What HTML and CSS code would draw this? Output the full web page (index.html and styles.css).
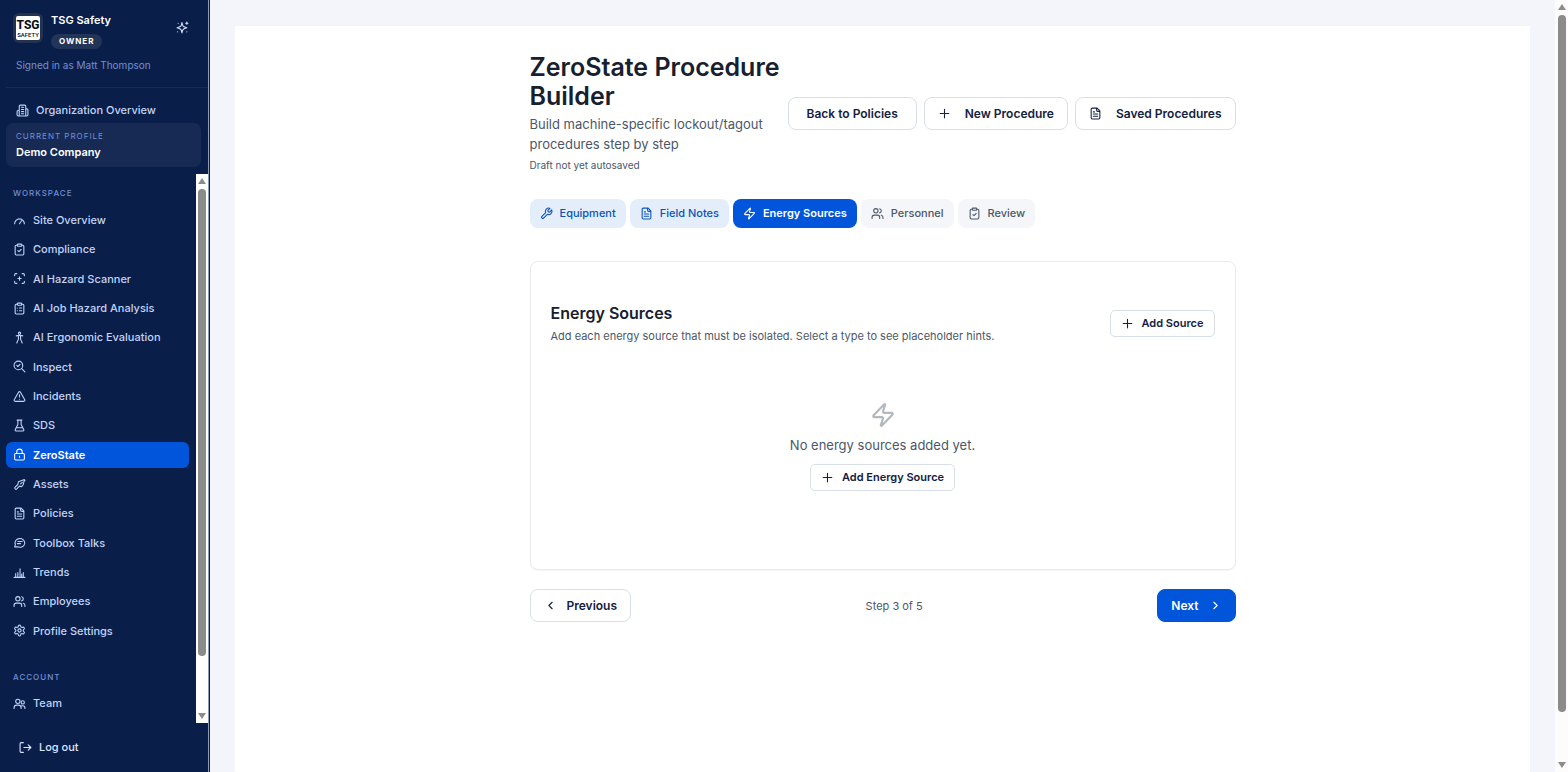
FILE: index.html
```
<!DOCTYPE html>
<html lang="en">
<head>
    <meta charset="UTF-8">
    <meta name="viewport" content="width=device-width, initial-scale=1.0">
    <title>ZeroState Procedure Builder - TSG Safety</title>
    <link rel="stylesheet" href="styles.css">
</head>
<body>
    <!-- Icon set -->
    <svg class="sprite" aria-hidden="true">
        <symbol id="i-sparkles" viewBox="0 0 24 24"><path d="M11 3c1 6 2 8 9 9.500-7 1.500-8 3.500-9 9.500-1-6-2-8-9-9.500 7-1.500 8-3.500 9-9.500z"/><path d="M20 2v4M18 4h4M20 20h.01M4 4h.01M3 20h.01"/></symbol>
        <symbol id="i-building" viewBox="0 0 24 24"><path d="M6 22V4a2 2 0 0 1 2-2h8a2 2 0 0 1 2 2v18zM6 12H4a2 2 0 0 0-2 2v6a2 2 0 0 0 2 2h2M18 9h2a2 2 0 0 1 2 2v9a2 2 0 0 1-2 2h-2M10 6h4M10 10h4M10 14h4M10 18h4"/></symbol>
        <symbol id="i-gauge" viewBox="0 0 24 24"><path d="M12 18l4-6M3 18a9 9 0 0 1 18 0"/></symbol>
        <symbol id="i-clip-check" viewBox="0 0 24 24"><rect x="8" y="2" width="8" height="4" rx="1"/><path d="M16 4h2a2 2 0 0 1 2 2v14a2 2 0 0 1-2 2H6a2 2 0 0 1-2-2V6a2 2 0 0 1 2-2h2M9 14l2 2 4-4"/></symbol>
        <symbol id="i-scan" viewBox="0 0 24 24"><path d="M3 7V5a2 2 0 0 1 2-2h2M17 3h2a2 2 0 0 1 2 2v2M21 17v2a2 2 0 0 1-2 2h-2M7 21H5a2 2 0 0 1-2-2v-2M12 9v6M9 12h6"/></symbol>
        <symbol id="i-clip-list" viewBox="0 0 24 24"><rect x="8" y="2" width="8" height="4" rx="1"/><path d="M16 4h2a2 2 0 0 1 2 2v14a2 2 0 0 1-2 2H6a2 2 0 0 1-2-2V6a2 2 0 0 1 2-2h2M12 11h4M12 16h4M8 11h.01M8 16h.01"/></symbol>
        <symbol id="i-person" viewBox="0 0 24 24"><circle cx="12" cy="4" r="2"/><path d="M6 9l6-1 6 1M10 9v6l-3 7M14 9v6l3 7"/></symbol>
        <symbol id="i-search-check" viewBox="0 0 24 24"><circle cx="10" cy="10" r="8"/><path d="M22 22l-6-6M7 10l2 2 4-4"/></symbol>
        <symbol id="i-alert" viewBox="0 0 24 24"><path d="M21.730 18l-8-14a2 2 0 0 0-3.480 0l-8 14A2 2 0 0 0 4 21h16a2 2 0 0 0 1.730-3zM12 9v4M12 17h.01"/></symbol>
        <symbol id="i-flask" viewBox="0 0 24 24"><path d="M9 2v8L4 20a1.500 1.500 0 0 0 1.300 2h13.400A1.500 1.500 0 0 0 20 20l-5-10V2M7.500 2h9M6.500 16h11"/></symbol>
        <symbol id="i-lock" viewBox="0 0 24 24"><rect x="3" y="10" width="18" height="12" rx="2"/><path d="M7 10V7a5 5 0 0 1 10 0v3M12 15v2"/></symbol>
        <symbol id="i-plug" viewBox="0 0 24 24"><path d="M9 12l-5 5a2 2 0 0 0 3 3l5-5 4 1 3-4 1-5 2-3M9 12l1-5 5-2 6-2M14 11l3-3"/></symbol>
        <symbol id="i-file" viewBox="0 0 24 24"><path d="M15 2H6a2 2 0 0 0-2 2v16a2 2 0 0 0 2 2h12a2 2 0 0 0 2-2V7zM14 2v4a2 2 0 0 0 2 2h4M10 9H8M16 13H8M16 17H8"/></symbol>
        <symbol id="i-chat" viewBox="0 0 24 24"><path d="M3 20l1.500-4A9 8 0 1 1 9 20zM9 10h8M8 14h6"/></symbol>
        <symbol id="i-chart" viewBox="0 0 24 24"><path d="M2 21h20M5 21v-7M9 21v-9M13 21V5M19 21V12M16 21V15"/></symbol>
        <symbol id="i-users" viewBox="0 0 24 24"><path d="M16 21v-2a4 4 0 0 0-4-4H6a4 4 0 0 0-4 4v2M22 21v-2a4 4 0 0 0-3-3.870M16 3.130a4 4 0 0 1 0 7.750"/><circle cx="9" cy="7" r="4"/></symbol>
        <symbol id="i-gear" viewBox="0 0 24 24"><path d="M12.220 2h-.44a2 2 0 0 0-2 2v.18a2 2 0 0 1-1 1.730l-.43.25a2 2 0 0 1-2 0l-.15-.08a2 2 0 0 0-2.730.73l-.22.38a2 2 0 0 0 .73 2.730l.15.1a2 2 0 0 1 1 1.720v.51a2 2 0 0 1-1 1.740l-.15.09a2 2 0 0 0-.73 2.730l.22.38a2 2 0 0 0 2.730.73l.15-.08a2 2 0 0 1 2 0l.43.25a2 2 0 0 1 1 1.730V20a2 2 0 0 0 2 2h.44a2 2 0 0 0 2-2v-.18a2 2 0 0 1 1-1.730l.43-.25a2 2 0 0 1 2 0l.15.08a2 2 0 0 0 2.730-.73l.22-.39a2 2 0 0 0-.73-2.730l-.15-.08a2 2 0 0 1-1-1.740v-.5a2 2 0 0 1 1-1.740l.15-.09a2 2 0 0 0 .73-2.730l-.22-.38a2 2 0 0 0-2.730-.73l-.15.08a2 2 0 0 1-2 0l-.43-.25a2 2 0 0 1-1-1.730V4a2 2 0 0 0-2-2z"/><circle cx="12" cy="12" r="3"/></symbol>
        <symbol id="i-team" viewBox="0 0 24 24"><circle cx="9" cy="8" r="4"/><circle cx="18" cy="10" r="3"/><path d="M2 21v-1a5 5 0 0 1 5-5h3a5 5 0 0 1 5 5v1M16 16h2a4 4 0 0 1 4 4v1"/></symbol>
        <symbol id="i-logout" viewBox="0 0 24 24"><path d="M8 21H4a2 2 0 0 1-2-2V5a2 2 0 0 1 2-2h4M17 17l5-5-5-5M22 12H9"/></symbol>
        <symbol id="i-wrench" viewBox="0 0 24 24"><path d="M14.700 6.300a1 1 0 0 0 0 1.400l1.600 1.600a1 1 0 0 0 1.400 0l3.770-3.770a6 6 0 0 1-7.940 7.940l-6.910 6.910a2.120 2.120 0 0 1-3-3l6.910-6.910a6 6 0 0 1 7.940-7.940l-3.760 3.760z"/></symbol>
        <symbol id="i-zap" viewBox="0 0 24 24"><path d="M4 14a1 1 0 0 1-.78-1.630l9.900-10.200a.5.5 0 0 1 .86.46l-1.920 6.020A1 1 0 0 0 13 10h7a1 1 0 0 1 .78 1.630l-9.900 10.200a.5.5 0 0 1-.86-.46l1.920-6.020A1 1 0 0 0 11 14z"/></symbol>
        <symbol id="i-plus" viewBox="0 0 24 24"><path d="M4 12h16M12 4v16"/></symbol>
        <symbol id="i-left" viewBox="0 0 24 24"><path d="M15 18l-6-6 6-6"/></symbol>
        <symbol id="i-right" viewBox="0 0 24 24"><path d="M9 18l6-6-6-6"/></symbol>
    </svg>

    <div class="app">
        <aside class="sidebar">
            <div class="brand">
                <div class="logo"><div class="logo-tile"><span class="logo-name">TSG</span><span class="logo-sub">SAFETY</span></div></div>
                <div class="brand-text">
                    <div class="brand-name">TSG Safety</div>
                    <span class="badge">OWNER</span>
                </div>
                <button class="sparkle-btn" type="button" aria-label="Assistant"><svg class="icon"><use href="#i-sparkles"/></svg></button>
            </div>
            <div class="signed-in">Signed in as Matt Thompson</div>

            <div class="org">
                <a class="org-link" href="#"><svg class="icon"><use href="#i-building"/></svg>Organization Overview</a>
                <div class="profile">
                    <div class="profile-label">CURRENT PROFILE</div>
                    <div class="profile-name">Demo Company</div>
                </div>
            </div>

            <div class="nav-area">
                <nav class="nav">
                    <h2 class="nav-label">WORKSPACE</h2>
                    <div class="nav-list">
                        <a class="nav-link" href="#"><svg class="icon"><use href="#i-gauge"/></svg>Site Overview</a>
                        <a class="nav-link" href="#"><svg class="icon"><use href="#i-clip-check"/></svg>Compliance</a>
                        <a class="nav-link" href="#"><svg class="icon"><use href="#i-scan"/></svg>AI Hazard Scanner</a>
                        <a class="nav-link" href="#"><svg class="icon"><use href="#i-clip-list"/></svg>AI Job Hazard Analysis</a>
                        <a class="nav-link" href="#"><svg class="icon"><use href="#i-person"/></svg>AI Ergonomic Evaluation</a>
                        <a class="nav-link" href="#"><svg class="icon"><use href="#i-search-check"/></svg>Inspect</a>
                        <a class="nav-link" href="#"><svg class="icon"><use href="#i-alert"/></svg>Incidents</a>
                        <a class="nav-link" href="#"><svg class="icon"><use href="#i-flask"/></svg>SDS</a>
                        <a class="nav-link active" href="#" aria-current="page"><svg class="icon"><use href="#i-lock"/></svg>ZeroState</a>
                        <a class="nav-link" href="#"><svg class="icon"><use href="#i-plug"/></svg>Assets</a>
                        <a class="nav-link" href="#"><svg class="icon"><use href="#i-file"/></svg>Policies</a>
                        <a class="nav-link" href="#"><svg class="icon"><use href="#i-chat"/></svg>Toolbox Talks</a>
                        <a class="nav-link" href="#"><svg class="icon"><use href="#i-chart"/></svg>Trends</a>
                        <a class="nav-link" href="#"><svg class="icon"><use href="#i-users"/></svg>Employees</a>
                        <a class="nav-link" href="#"><svg class="icon"><use href="#i-gear"/></svg>Profile Settings</a>
                    </div>
                    <h2 class="nav-label account">ACCOUNT</h2>
                    <a class="nav-link" href="#"><svg class="icon"><use href="#i-team"/></svg>Team</a>
                </nav>
                <div class="scrollbar" aria-hidden="true">
                    <span class="arrow up"></span>
                    <div class="track"><div class="thumb"></div></div>
                    <span class="arrow down"></span>
                </div>
            </div>

            <button class="logout" type="button"><svg class="icon"><use href="#i-logout"/></svg>Log out</button>
        </aside>

        <main class="main">
            <div class="page">
                <div class="content">
                    <header class="page-header">
                        <div class="page-title">
                            <h1>ZeroState Procedure Builder</h1>
                            <p class="subtitle">Build machine-specific lockout/tagout procedures step by step</p>
                            <p class="draft">Draft not yet autosaved</p>
                        </div>
                        <div class="actions">
                            <button class="btn wide" type="button">Back to Policies</button>
                            <button class="btn" type="button"><svg class="icon"><use href="#i-plus"/></svg>New Procedure</button>
                            <button class="btn" type="button"><svg class="icon"><use href="#i-file"/></svg>Saved Procedures</button>
                        </div>
                    </header>

                    <div class="steps">
                        <button class="step done" type="button"><svg class="icon"><use href="#i-wrench"/></svg>Equipment</button>
                        <button class="step done" type="button"><svg class="icon"><use href="#i-file"/></svg>Field Notes</button>
                        <button class="step current" type="button"><svg class="icon"><use href="#i-zap"/></svg>Energy Sources</button>
                        <button class="step" type="button"><svg class="icon"><use href="#i-users"/></svg>Personnel</button>
                        <button class="step" type="button"><svg class="icon"><use href="#i-clip-check"/></svg>Review</button>
                    </div>

                    <section class="card">
                        <div class="card-header">
                            <div>
                                <h2>Energy Sources</h2>
                                <p>Add each energy source that must be isolated. Select a type to see placeholder hints.</p>
                            </div>
                            <button class="btn small" type="button"><svg class="icon"><use href="#i-plus"/></svg>Add Source</button>
                        </div>
                        <div class="empty">
                            <svg class="icon"><use href="#i-zap"/></svg>
                            <p>No energy sources added yet.</p>
                            <button class="btn small" type="button"><svg class="icon"><use href="#i-plus"/></svg>Add Energy Source</button>
                        </div>
                    </section>

                    <div class="pager">
                        <button class="btn" type="button"><svg class="icon"><use href="#i-left"/></svg>Previous</button>
                        <span>Step 3 of 5</span>
                        <button class="btn primary" type="button">Next<svg class="icon"><use href="#i-right"/></svg></button>
                    </div>
                </div>
            </div>
        </main>

        <div class="scrollbar page-scroll" aria-hidden="true">
            <span class="arrow up"></span>
            <div class="track"><div class="thumb"></div></div>
            <span class="arrow down"></span>
        </div>
    </div>
</body>
</html>
```
FILE: styles.css
```
* {
    box-sizing: border-box;
}
body {
    margin: 0;
    font-family: Inter, "Liberation Sans", sans-serif;
    font-size: 12px;
    color: #17202e;
    background-color: #f3f5fa;
}
h1, h2, p {
    margin: 0;
}
a {
    color: inherit;
    text-decoration: none;
}
button {
    font-family: inherit;
    cursor: pointer;
}
.sprite {
    display: none;
}
.icon {
    flex: none;
    width: 13px;
    height: 13px;
    fill: none;
    stroke: currentColor;
    stroke-width: 2;
    stroke-linecap: round;
    stroke-linejoin: round;
}
.app {
    display: flex;
    height: 100vh;
    overflow: hidden;
}

/* Sidebar */
.sidebar {
    flex: none;
    display: flex;
    flex-direction: column;
    width: 210px;
    background-color: #091e49;
    border-right: 1px solid #091e49;
    box-shadow: inset -1px 0 #8d9ab5;
    color: #c3d4f7;
    padding-right: 1px;
}
.brand {
    display: flex;
    align-items: flex-start;
    padding: 13px 19px 0 13px;
}
.logo {
    padding: 3px;
    border-radius: 6px;
    background-color: #24324f;
}
.logo-tile {
    display: flex;
    flex-direction: column;
    align-items: center;
    justify-content: center;
    width: 24px;
    height: 24px;
    border-radius: 2px;
    background-color: #fff;
    color: #111;
    font-family: Roboto, "Liberation Sans", sans-serif;
}
.logo-name {
    font-size: 12px;
    line-height: 12px;
    font-weight: 800;
}
.logo-sub {
    font-size: 6px;
    line-height: 7px;
    font-weight: 500;
}
.brand-text {
    flex: 1;
    padding-left: 8px;
}
.brand-name {
    font-size: 11px;
    line-height: 15px;
    font-weight: 600;
    color: #fff;
    margin-bottom: 6px;
}
.badge {
    display: block;
    width: fit-content;
    padding: 0 8px;
    border-radius: 8px;
    background-color: #233459;
    color: #fff;
    font-size: 8px;
    line-height: 15px;
    font-weight: 700;
    letter-spacing: 1px;
}
.sparkle-btn {
    display: flex;
    margin-top: 8px;
    padding: 0;
    border: 0;
    background: none;
    color: #d9e5ff;
}
.signed-in {
    margin: 8px 0 0 6px;
    padding: 0 10px 13px;
    border-bottom: 1px solid #182c56;
    font-size: 10px;
    line-height: 17px;
    color: #7590d3;
}
.org {
    padding: 13px 7px 7px 6px;
}
.org-link {
    display: flex;
    align-items: center;
    gap: 7px;
    padding: 0 10px 4px;
    font-size: 11px;
    line-height: 18px;
    font-weight: 500;
}
.profile {
    padding: 6px 10px 7px;
    border-radius: 7px;
    background-color: #172a54;
}
.profile-label {
    font-size: 8px;
    line-height: 15px;
    letter-spacing: 1px;
    color: #7590d3;
}
.profile-name {
    font-size: 11px;
    line-height: 16px;
    font-weight: 600;
    color: #fff;
}
.nav-area {
    flex: 1;
    display: flex;
    min-height: 0;
}
.nav {
    flex: 1;
    display: flex;
    flex-direction: column;
    padding: 12px 7px 7px 6px;
}
.nav-list {
    flex: 1;
    display: flex;
    flex-direction: column;
    justify-content: space-between;
}
.nav-label {
    padding: 0 7px;
    margin-bottom: 7px;
    font-size: 8px;
    line-height: 14px;
    font-weight: 500;
    letter-spacing: 1px;
    color: #7590d3;
}
.account {
    margin-top: 26px;
    margin-bottom: 6px;
}
.nav-link {
    display: flex;
    align-items: center;
    gap: 7px;
    padding: 0 7px;
    border-radius: 6px;
    font-size: 11px;
    line-height: 26px;
    font-weight: 500;
}
.nav-link.active {
    background-color: #0055da;
    color: #fff;
    font-weight: 600;
}
.logout {
    display: flex;
    align-items: center;
    gap: 7px;
    padding: 16px 19px 17px;
    border: 0;
    background: none;
    color: #dce7ff;
    font-size: 11px;
    line-height: 16px;
    font-weight: 500;
}

/* Scrollbars */
.scrollbar {
    flex: none;
    display: flex;
    flex-direction: column;
    align-items: center;
    width: 12px;
    padding: 4px 0;
    background-color: #fff;
}
.arrow {
    border: 4px solid transparent;
}
.arrow.up {
    border-top: 0;
    border-bottom: 6px solid #8b8b8b;
}
.arrow.down {
    border-bottom: 0;
    border-top: 6px solid #8b8b8b;
}
.track {
    flex: 1;
    width: 8px;
    padding: 5px 0;
}
.thumb {
    height: 90%;
    border-radius: 4px;
    background-color: #8b8b8b;
}
.page-scroll {
    width: 13px;
    background-color: #fcfcfc;
}
.page-scroll .thumb {
    height: 94%;
}

/* Main area */
.main {
    flex: 1;
    display: flex;
    padding: 26px 25px 0;
}
.page {
    flex: 1;
    padding: 27px 24px;
    background-color: #fff;
}
.content {
    max-width: 706px;
    margin: 0 auto;
}
.page-header {
    display: flex;
    align-items: center;
    justify-content: space-between;
    gap: 4px;
    margin-bottom: 26px;
}
.page-title {
    flex: 1;
}
.page-title h1 {
    font-size: 25px;
    line-height: 29px;
    font-weight: 600;
}
.subtitle {
    margin-top: 3px;
    font-size: 13px;
    line-height: 20px;
    color: #4b5768;
}
.draft {
    margin-top: 3px;
    font-size: 10px;
    line-height: 16px;
    color: #4b5768;
}
.actions {
    display: flex;
    gap: 7px;
}
.btn {
    display: flex;
    align-items: center;
    gap: 14px;
    padding: 7px 13px;
    border: 1px solid #d9dfe9;
    border-radius: 8px;
    background-color: #fff;
    color: #13213f;
    font-size: 12px;
    line-height: 17px;
    font-weight: 600;
    white-space: nowrap;
}
.btn.wide {
    padding: 7px 18px;
}
.btn.small {
    gap: 8px;
    padding: 5px 10px;
    border-radius: 5px;
    font-size: 11px;
    line-height: 15px;
}
.btn.primary {
    border-color: #0055da;
    background-color: #0055da;
    color: #fff;
}
.steps {
    display: flex;
    gap: 4px;
    margin-bottom: 33px;
}
.step {
    display: flex;
    align-items: center;
    gap: 7px;
    padding: 6px 10px;
    border: 0;
    border-radius: 8px;
    background-color: #f5f6fa;
    color: #4b5768;
    font-size: 11px;
    line-height: 17px;
    font-weight: 500;
}
.step.done {
    background-color: #e4eefa;
    color: #0b53b8;
}
.step.current {
    background-color: #0055da;
    color: #fff;
    font-weight: 600;
}
.card {
    padding: 40px 20px 78px;
    border: 1px solid #e8eaee;
    border-radius: 8px;
    box-shadow: 0 1px 1px rgba(0, 0, 0, 0.04);
}
.card-header {
    display: flex;
    align-items: center;
    justify-content: space-between;
}
.card-header h2 {
    font-size: 16px;
    line-height: 22px;
    font-weight: 600;
}
.card-header p {
    margin-top: 4px;
    font-size: 11px;
    line-height: 16px;
    color: #4b5768;
}
.empty {
    display: flex;
    flex-direction: column;
    align-items: center;
    padding-top: 58px;
}
.empty > .icon {
    width: 26px;
    height: 26px;
    color: #b3b7be;
}
.empty p {
    margin: 7px 0 9px;
    font-size: 13px;
    line-height: 20px;
    color: #4b5768;
}
.pager {
    display: flex;
    align-items: center;
    justify-content: space-between;
    margin-top: 19px;
}
.pager .btn {
    gap: 10px;
}
.pager span {
    font-size: 11px;
    color: #4b5768;
}
```
